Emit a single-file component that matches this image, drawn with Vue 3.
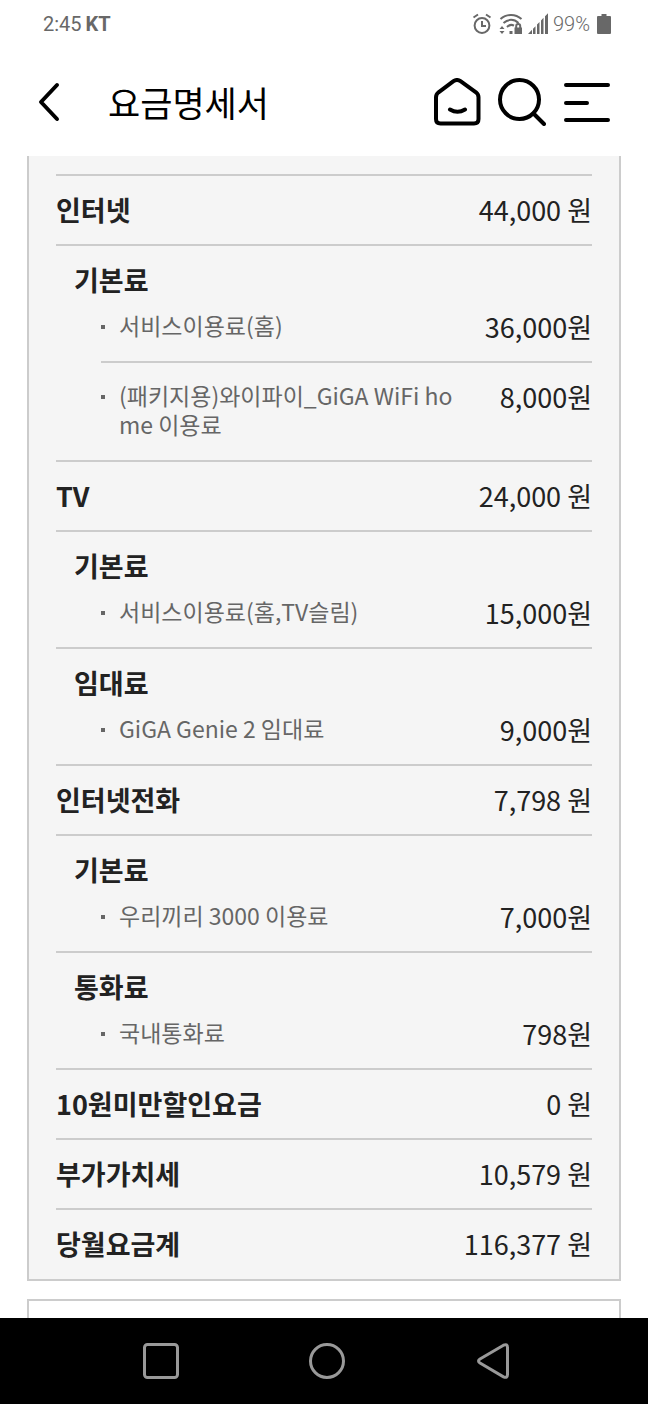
<template>
  <div class="phone">
    <!-- 상태 표시줄 -->
    <div class="status-bar">
      <div class="status-left">
        <span>2:45</span>
        <strong>KT</strong>
      </div>
      <div class="status-right">
        <svg class="icon-alarm" viewBox="0 0 20 22" aria-hidden="true">
          <circle cx="10" cy="12.500" r="7.400" />
          <path d="M10 8v5h4M1.500 4.500 6 1.500M18.500 4.500 14 1.500" />
        </svg>
        <svg class="icon-wifi" viewBox="0 0 24 22" aria-hidden="true">
          <path class="line" d="M1.500 6C7.500 0.500 16.500 0.500 22.500 6M4.500 10C9 5.800 15 5.800 19.500 10M8 14C10.200 11.800 13 11.500 15 12.600" />
          <path d="M0.500 16 3 13l2.500 3zM0.500 18h5L3 21zM10.500 18h3v3h-3z" />
          <path d="M15.500 14.500H23V21h-7.500z" />
          <path class="thin" d="M17.200 15v-2a2 2 0 0 1 4 0v2" />
        </svg>
        <svg class="icon-signal" viewBox="0 0 20 22" aria-hidden="true">
          <path d="M0 21l4-4.200V21zM5 15.800l2.500-2.600V21H5zM9 11.600 11.500 9v12H9zM13 7.400l2.500-2.600V21H13zM17 3.200l3-3V21h-3z" />
        </svg>
        <span class="battery-text">99%</span>
        <svg class="icon-battery" viewBox="0 0 14 20" aria-hidden="true">
          <path d="M4.500 0h5v2H13q1 0 1 1v16q0 1-1 1H1q-1 0-1-1V3q0-1 1-1h3.500z" />
        </svg>
      </div>
    </div>

    <!-- 상단 헤더 -->
    <header class="header">
      <button type="button" class="back-btn" aria-label="뒤로">
        <svg viewBox="0 0 24 40">
          <path d="M20 3 4 20l16 17" />
        </svg>
      </button>
      <h1 class="title">요금명세서</h1>
      <div class="header-actions">
        <button type="button" aria-label="홈">
          <svg viewBox="0 0 48 48">
            <path d="M20.500 3.200q3.500-2.400 7 0L43 14.300q2.500 2 2.500 5V41q0 4.500-4.500 4.500H7.500Q3 45.500 3 41V19.300q0-3 2.500-5zM17 31.500q7.500 4.500 15 0" />
          </svg>
        </button>
        <button type="button" aria-label="검색">
          <svg viewBox="0 0 48 48">
            <circle cx="21.500" cy="21.500" r="19.500" />
            <path d="M35.500 35.500l10.500 10.500" />
          </svg>
        </button>
        <button type="button" aria-label="메뉴">
          <svg viewBox="0 0 48 48">
            <path d="M3 7h42M3 25h21M3 42h42" />
          </svg>
        </button>
      </div>
    </header>

    <!-- 요금 내역 -->
    <main class="content">
      <div class="bill">
        <section v-for="bill in bills" :key="bill.name">
          <div class="bill-row">
            <h2 class="bill-name">{{ bill.name }}</h2>
            <span class="amount">{{ bill.amount }} 원</span>
          </div>
          <div v-for="group in bill.groups" :key="group.name" class="group">
            <h3 class="group-name">{{ group.name }}</h3>
            <ul class="group-list">
              <li v-for="item in group.items" :key="item.name" class="item">
                <span class="item-name">{{ item.name }}</span>
                <span class="amount">{{ item.amount }}원</span>
              </li>
            </ul>
          </div>
        </section>
      </div>
      <div class="next-box"></div>
    </main>

    <!-- 하단 내비게이션 -->
    <nav class="nav-bar">
      <button type="button" aria-label="최근 앱">
        <svg viewBox="0 0 36 36">
          <rect x="1.500" y="1.500" width="33" height="33" rx="3" />
        </svg>
      </button>
      <button type="button" aria-label="홈 화면">
        <svg viewBox="0 0 36 36">
          <circle cx="18" cy="18" r="16.500" />
        </svg>
      </button>
      <button type="button" aria-label="이전">
        <svg viewBox="0 0 36 36">
          <path d="M28.500 2.200 5 16q-3 2 0 4l23.500 13.800q4 1.700 4-2.300v-27q0-4-4-2.300z" />
        </svg>
      </button>
    </nav>
  </div>
</template>

<script setup>
  import { ref } from 'vue';

  // 서비스별 요금 데이터
  const bills = ref([
    {
      name: '인터넷',
      amount: '44,000',
      groups: [
        {
          name: '기본료',
          items: [
            { name: '서비스이용료(홈)', amount: '36,000' },
            { name: '(패키지용)와이파이_GiGA WiFi home 이용료', amount: '8,000' }
          ]
        }
      ]
    },
    {
      name: 'TV',
      amount: '24,000',
      groups: [
        {
          name: '기본료',
          items: [{ name: '서비스이용료(홈,TV슬림)', amount: '15,000' }]
        },
        {
          name: '임대료',
          items: [{ name: 'GiGA Genie 2 임대료', amount: '9,000' }]
        }
      ]
    },
    {
      name: '인터넷전화',
      amount: '7,798',
      groups: [
        {
          name: '기본료',
          items: [{ name: '우리끼리 3000 이용료', amount: '7,000' }]
        },
        {
          name: '통화료',
          items: [{ name: '국내통화료', amount: '798' }]
        }
      ]
    },
    { name: '10원미만할인요금', amount: '0' },
    { name: '부가가치세', amount: '10,579' },
    { name: '당월요금계', amount: '116,377' }
  ]);
</script>

<style>
  body {
    margin: 0;
    background-color: #ffffff;
  }
</style>

<style scoped>
  .phone {
    display: flex;
    flex-direction: column;
    min-height: 100vh;
    background-color: #ffffff;
    color: #222222;
    font-family: 'Noto Sans CJK KR', sans-serif;
  }

  button {
    display: block;
    padding: 0;
    border: none;
    background: none;
    cursor: pointer;
  }

  svg {
    display: block;
  }

  /* 상태 표시줄 */
  .status-bar {
    display: flex;
    justify-content: space-between;
    align-items: center;
    height: 48px;
    padding: 0 37px 0 43px;
    color: #686868;
    font-family: Roboto, sans-serif;
    font-size: 20px;
  }

  .status-left {
    display: flex;
    gap: 4px;
  }

  .status-right {
    display: flex;
    align-items: center;
    gap: 5px;
  }

  .status-right svg {
    height: 22px;
    fill: #686868;
  }

  .status-right .icon-alarm {
    width: 20px;
    margin-right: 2px;
    fill: none;
    stroke: #686868;
    stroke-width: 2;
  }

  .icon-wifi {
    width: 24px;
  }

  .icon-wifi .line,
  .icon-wifi .thin {
    fill: none;
    stroke: #686868;
    stroke-width: 2;
  }

  .icon-signal {
    width: 20px;
  }

  .battery-text {
    font-weight: 300;
  }

  .status-right .icon-battery {
    width: 14px;
    height: 20px;
    margin-left: 2px;
  }

  /* 상단 헤더 */
  .header {
    display: flex;
    align-items: center;
    height: 108px;
    padding: 0 37px;
  }

  .back-btn {
    margin-right: 47px;
  }

  .back-btn svg {
    width: 24px;
    height: 40px;
  }

  .header svg {
    fill: none;
    stroke: #000000;
    stroke-width: 4;
    stroke-linecap: round;
    stroke-linejoin: round;
  }

  .title {
    flex: 1;
    margin: 0;
    color: #000000;
    font-size: 35px;
    font-weight: 400;
    line-height: 46px;
  }

  .header-actions {
    display: flex;
    gap: 17px;
  }

  .header-actions svg {
    width: 48px;
    height: 48px;
  }

  /* 요금 내역 */
  .content {
    display: flex;
    flex: 1;
    flex-direction: column;
    padding: 0 27px;
  }

  .bill {
    padding: 18px 27px 1px;
    border: 2px solid #cccccc;
    border-top: none;
    background-color: #f5f5f5;
  }

  .bill-row {
    display: flex;
    justify-content: space-between;
    padding: 19px 0 20px;
    border-top: 2px solid #cccccc;
  }

  .bill-name,
  .group-name {
    margin: 0;
    font-size: 27px;
    font-weight: 700;
    line-height: 29px;
  }

  .amount {
    font-size: 27px;
    line-height: 29px;
    white-space: nowrap;
  }

  .group {
    padding: 19px 0 0 18px;
    border-top: 2px solid #cccccc;
  }

  .group-list {
    margin: 0;
    padding: 18px 0 0 27px;
    list-style: none;
  }

  .item {
    display: flex;
    justify-content: space-between;
    gap: 40px;
    padding-bottom: 20px;
  }

  .item + .item {
    padding-top: 19px;
    border-top: 2px solid #cccccc;
  }

  .item-name {
    display: flex;
    gap: 14px;
    margin: -1px 0 1px;
    color: #666666;
    font-size: 23px;
    line-height: 29px;
    word-break: break-all;
  }

  .item-name::before {
    content: '';
    flex: none;
    width: 4px;
    height: 4px;
    margin-top: 14px;
    background-color: #666666;
  }

  .next-box {
    flex: 1;
    min-height: 16px;
    margin-top: 18px;
    border: 2px solid #cccccc;
    border-bottom: none;
  }

  /* 하단 내비게이션 */
  .nav-bar {
    display: flex;
    justify-content: space-around;
    align-items: center;
    height: 86px;
    padding: 0 72px 0 78px;
    background-color: #000000;
  }

  .nav-bar svg {
    width: 36px;
    height: 36px;
    fill: none;
    stroke: #999999;
    stroke-width: 3;
  }
</style>
